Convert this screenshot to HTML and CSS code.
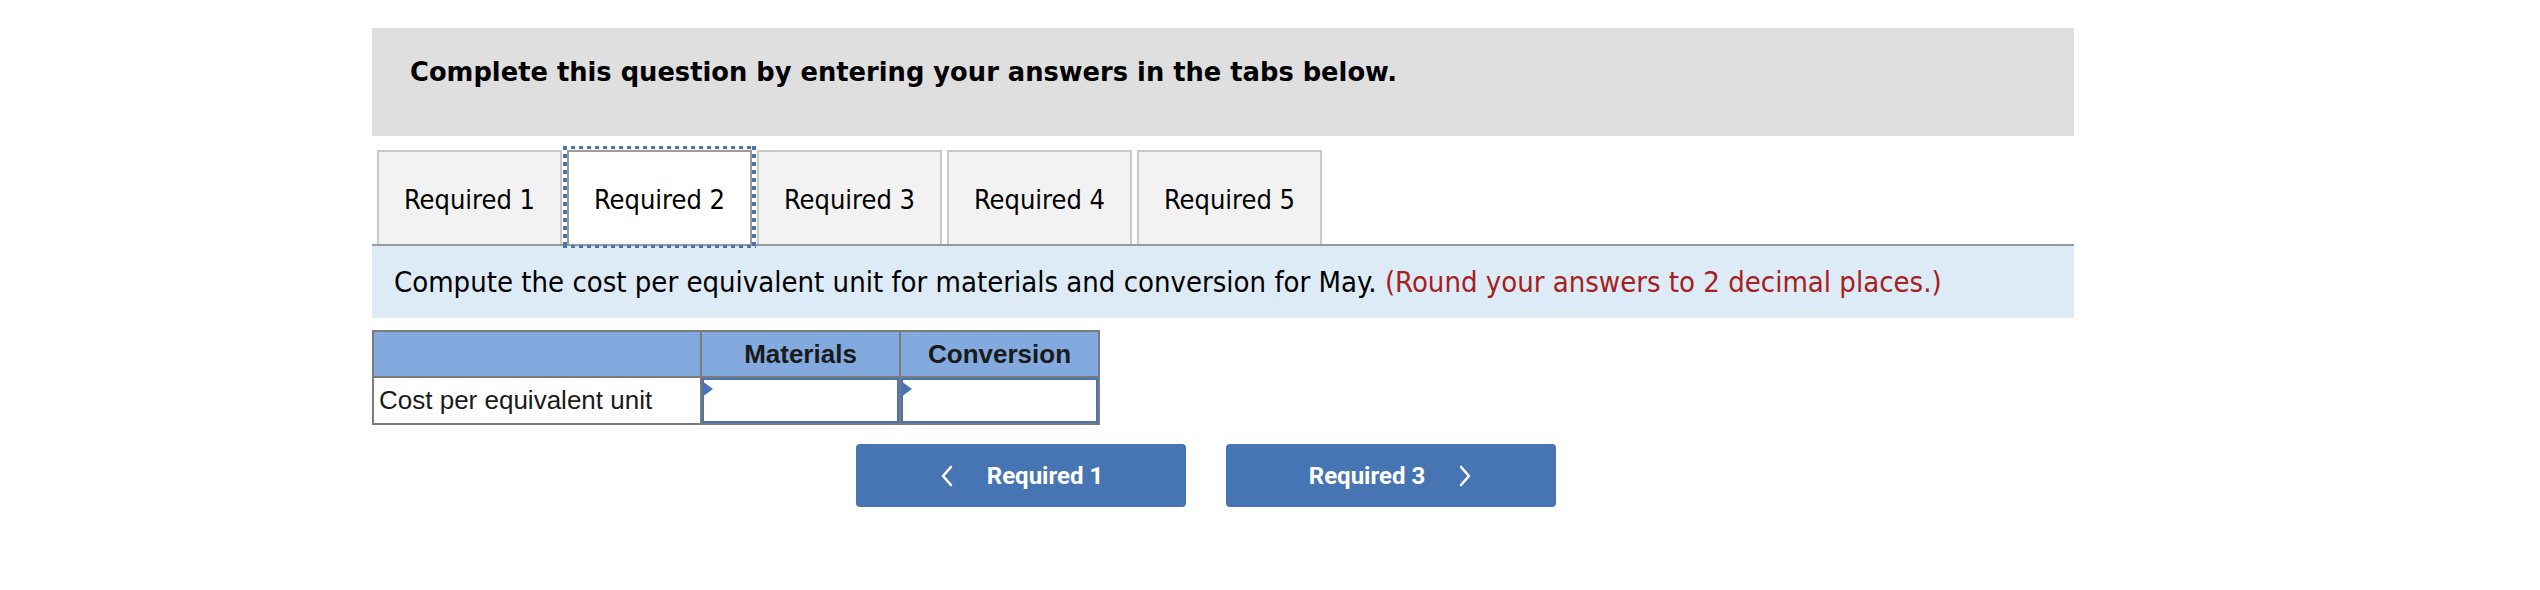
FILE: index.html
```html
<!DOCTYPE html>
<html>
<head>
<meta charset="utf-8">
<link rel="stylesheet" href="styles.css">
</head>
<body>
<div class="page">
  <div class="q-header">Complete this question by entering your answers in the tabs below.</div>
  <div class="tabs">
    <div class="tab">Required 1</div>
    <div class="tab active">Required 2</div>
    <div class="tab">Required 3</div>
    <div class="tab">Required 4</div>
    <div class="tab">Required 5</div>
  </div>
  <div class="instructions">Compute the cost per equivalent unit for materials and conversion for May.&nbsp;<span class="hint">(Round your answers to 2 decimal places.)</span></div>
  <table class="grid">
    <tr class="head">
      <th class="c1"></th>
      <th class="c2">Materials</th>
      <th class="c3">Conversion</th>
    </tr>
    <tr class="body">
      <td class="label">Cost per equivalent unit</td>
      <td class="entry"><div class="input"><span class="flag"></span></div></td>
      <td class="entry"><div class="input"><span class="flag"></span></div></td>
    </tr>
  </table>
  <div class="nav">
    <button class="nav-btn"><svg class="chev" width="16" height="22" viewBox="0 0 16 22"><path d="M12 2 L4 11 L12 20" fill="none" stroke="#fff" stroke-width="2.6" stroke-linecap="round" stroke-linejoin="round"/></svg><span>Required 1</span></button>
    <button class="nav-btn"><span>Required 3</span><svg class="chev" width="16" height="22" viewBox="0 0 16 22"><path d="M4 2 L12 11 L4 20" fill="none" stroke="#fff" stroke-width="2.6" stroke-linecap="round" stroke-linejoin="round"/></svg></button>
  </div>
</div>
</body>
</html>
```
FILE: styles.css
```css
body {
  margin: 0;
  background: #ffffff;
  font-family: "DejaVu Sans Condensed", "DejaVu Sans", sans-serif;
  color: #000;
}
.page {
  margin-left: 372px;
  width: 1702px;
  padding-top: 28px;
}
.q-header {
  height: 108px;
  box-sizing: border-box;
  background: #dfdfdf;
  padding: 29px 0 0 38px;
  font-family: "DejaVu Sans", sans-serif;
  font-weight: bold;
  font-size: 25.75px;
  line-height: 30px;
}
.tabs {
  display: flex;
  gap: 5px;
  padding-left: 5px;
  margin-top: 14px;
  height: 94px;
}
.tab {
  position: relative;
  width: 185px;
  box-sizing: border-box;
  border: 2px solid #c9c9c9;
  border-bottom: none;
  background: #f2f2f2;
  display: flex;
  align-items: center;
  justify-content: center;
  font-size: 27px;
  padding-top: 2px;
}
.tab.active {
  background: #ffffff;
  border-color: #9a9a9a;
  z-index: 2;
}
.tab.active::after {
  content: "";
  position: absolute;
  left: -6px;
  right: -6px;
  top: -6px;
  bottom: -4px;
  pointer-events: none;
  background:
    repeating-linear-gradient(90deg, #4a74b4 0 4px, transparent 4px 8px) top left / 100% 3px no-repeat,
    repeating-linear-gradient(90deg, #4a74b4 0 4px, transparent 4px 8px) bottom left / 100% 3px no-repeat,
    repeating-linear-gradient(180deg, #4a74b4 0 4px, transparent 4px 8px) top left / 4px 100% no-repeat,
    repeating-linear-gradient(180deg, #4a74b4 0 4px, transparent 4px 8px) top right / 4px 100% no-repeat;
}
.instructions {
  position: relative;
  height: 74px;
  box-sizing: border-box;
  background: #ddebf7;
  border-top: 2px solid #999999;
  padding-left: 22px;
  display: flex;
  align-items: center;
  font-size: 29px;
}
.hint {
  color: #a52021;
}
.grid {
  margin-top: 12px;
  border-collapse: collapse;
  font-family: "Liberation Sans", Arial, sans-serif;
  font-size: 26px;
}
.grid th, .grid td {
  border: 2px solid #7b7b7b;
  padding: 0;
}
.grid tr.head th {
  background: #82aadf;
  height: 44px;
  font-weight: bold;
  color: #1a1a1a;
}
.c1 { width: 326px; }
.c2, .c3 { width: 197px; }
.grid tr.body td {
  height: 45px;
}
.label {
  padding-left: 5px !important;
  text-align: left;
  color: #1a1a1a;
}
.entry {
  position: relative;
}
.input {
  position: relative;
  box-sizing: border-box;
  height: 45px;
  border: 2px solid #4a73b5;
  background: #fff;
}
.flag {
  position: absolute;
  left: -2px;
  top: 1px;
  width: 0;
  height: 0;
  border-top: 8px solid transparent;
  border-bottom: 8px solid transparent;
  border-left: 11px solid #4a73b5;
}
.nav {
  display: flex;
  gap: 40px;
  margin-top: 19px;
  margin-left: 484px;
}
.nav-btn {
  width: 330px;
  height: 63px;
  border: none;
  border-radius: 4px;
  background: #4775b3;
  color: #fff;
  font-family: Roboto, "Liberation Sans", sans-serif;
  font-weight: bold;
  font-size: 24px;
  display: flex;
  align-items: center;
  justify-content: center;
  gap: 32px;
  padding: 0;
}
.chev {
  display: block;
}
```
